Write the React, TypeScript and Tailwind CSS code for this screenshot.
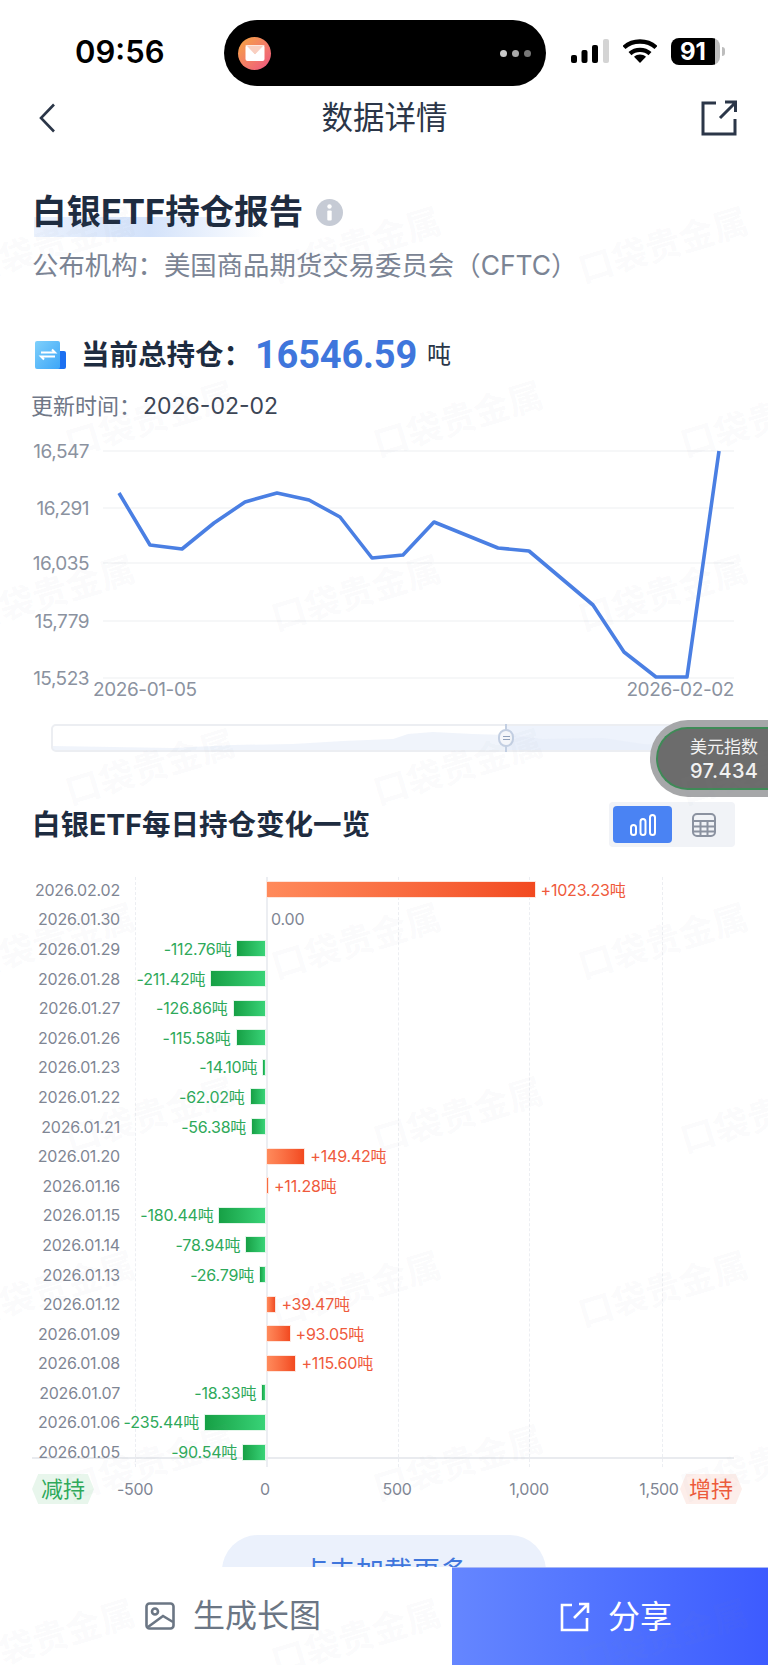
import React from 'react';

interface DayChange {
    date: string;
    value: number;
    label: string;
}

const DAILY_CHANGES: DayChange[] = [
    { date: '2026.02.02', value: 1023.23, label: '+1023.23吨' },
    { date: '2026.01.30', value: 0, label: '0.00' },
    { date: '2026.01.29', value: -112.76, label: '-112.76吨' },
    { date: '2026.01.28', value: -211.42, label: '-211.42吨' },
    { date: '2026.01.27', value: -126.86, label: '-126.86吨' },
    { date: '2026.01.26', value: -115.58, label: '-115.58吨' },
    { date: '2026.01.23', value: -14.1, label: '-14.10吨' },
    { date: '2026.01.22', value: -62.02, label: '-62.02吨' },
    { date: '2026.01.21', value: -56.38, label: '-56.38吨' },
    { date: '2026.01.20', value: 149.42, label: '+149.42吨' },
    { date: '2026.01.16', value: 11.28, label: '+11.28吨' },
    { date: '2026.01.15', value: -180.44, label: '-180.44吨' },
    { date: '2026.01.14', value: -78.94, label: '-78.94吨' },
    { date: '2026.01.13', value: -26.79, label: '-26.79吨' },
    { date: '2026.01.12', value: 39.47, label: '+39.47吨' },
    { date: '2026.01.09', value: 93.05, label: '+93.05吨' },
    { date: '2026.01.08', value: 115.6, label: '+115.60吨' },
    { date: '2026.01.07', value: -18.33, label: '-18.33吨' },
    { date: '2026.01.06', value: -235.44, label: '-235.44吨' },
    { date: '2026.01.05', value: -90.54, label: '-90.54吨' },
];

const PX_PER_TON = 0.2634;

const LINE_POINTS = '119,63 150,115 182,119 214,93 245,72 277,63 309,70 340,87 372,128 403,125 434,92 466,105 498,118 529,121 561,148 593,175 624,222 656,247 687,247 719,21';

const Y_TICKS = [
    { label: '16,547', y: 21 },
    { label: '16,291', y: 78 },
    { label: '16,035', y: 133 },
    { label: '15,779', y: 191 },
    { label: '15,523', y: 248 },
];

const X_TICKS = [
    { label: '-500', x: 135 },
    { label: '0', x: 265 },
    { label: '500', x: 397 },
    { label: '1,000', x: 529 },
    { label: '1,500', x: 659 },
];

const WATERMARKS = [245, 419, 593, 767, 941, 1115, 1289, 1463, 1637].flatMap((y, row) =>
    (row % 2 === 0 ? [50, 356, 663] : [150, 458, 765]).map(x => ({ x, y }))
);

const StatusBar = () => (
    <div className="relative h-[90px] shrink-0 flex items-start">
        <span className="ml-[75px] mt-[33px] w-[92px] text-[31px] leading-[38px] font-semibold text-black">09:56</span>
        <div className="ml-[57px] mt-[20px] w-[322px] h-[66px] rounded-[33px] bg-black flex items-center justify-between pl-[14px] pr-[15px]">
            <div className="w-[33px] h-[33px] rounded-full bg-linear-to-br from-[#f5a637] to-[#ee4f7e] flex items-center justify-center">
                <svg width="20" height="18" viewBox="0 0 20 18">
                    <rect x="0.5" y="1" width="19" height="16" rx="2" fill="#fff" />
                    <path d="M1 1.5h18L10 11z" fill="#f9cfc0" />
                    <path d="M1 1.5L10 11l9-9.5" fill="none" stroke="#fff" strokeWidth="1" />
                </svg>
            </div>
            <div className="flex items-center gap-[5px]">
                <span className="w-[7px] h-[7px] rounded-full bg-[#c9c9c9]" />
                <span className="w-[7px] h-[7px] rounded-full bg-[#a8a8a8]" />
                <span className="w-[7px] h-[7px] rounded-full bg-[#777]" />
            </div>
        </div>
        <svg className="ml-[25px] mt-[39px]" width="38" height="24" viewBox="0 0 38 24">
            <rect x="0" y="16" width="6" height="8" rx="2" fill="#000" />
            <rect x="10.5" y="11" width="6" height="13" rx="2" fill="#000" />
            <rect x="21" y="6" width="6" height="18" rx="2" fill="#000" />
            <rect x="32" y="0" width="6" height="24" rx="2" fill="#d4d4d4" />
        </svg>
        <svg className="ml-[14px] mt-[39px]" width="34" height="24" viewBox="0 0 34 24">
            <path d="M1 8.5C9.5 0.5 24.5 0.5 33 8.5" fill="none" stroke="#000" strokeWidth="4.4" />
            <path d="M7 14.6C12.5 9.6 21.5 9.6 27 14.6" fill="none" stroke="#000" strokeWidth="4.4" />
            <path d="M17 24l-6-6.2c3.4-3 8.6-3 12 0z" fill="#000" />
        </svg>
        <div className="ml-[14px] mt-[38px] flex items-center">
            <div className="w-[49px] h-[27px] rounded-[8px] bg-linear-to-r from-black from-[90%] to-[#bdbdbd] to-[90%] flex items-center justify-start pl-[9px]">
                <span className="text-[24px] leading-[27px] font-bold text-white">91</span>
            </div>
            <span className="ml-[2px] w-[3px] h-[9px] rounded-r-full bg-[#bdbdbd]" />
        </div>
    </div>
);

const NavBar = () => (
    <div className="h-[56px] shrink-0 flex items-center justify-between pl-[38px] pr-[31px]">
        <div className="w-[30px]">
            <svg width="18" height="30" viewBox="0 0 18 30">
                <path d="M16 1.5L3 15l13 13.5" fill="none" stroke="#2b3648" strokeWidth="2.6" />
            </svg>
        </div>
        <h1 className="text-[31.500px] leading-[40px] font-normal text-[#2b3648]">数据详情</h1>
        <svg width="36" height="36" viewBox="0 0 36 36" fill="none" stroke="#2b3648" strokeWidth="3">
            <path d="M15 3H2v31h32V19" />
            <path d="M19 18L34 3M24 2h10.5v10" />
        </svg>
    </div>
);

const SliderBar = () => (
    <div className="relative h-[28px] ml-[51px] w-[667px] rounded-[5px] border-2 border-[#eceef2] bg-white">
        <div className="absolute top-0 bottom-0 left-[454px] right-0 bg-[#eef3fc]" />
        <svg className="absolute inset-0" width="663" height="24" viewBox="0 0 663 24" preserveAspectRatio="none">
            <path d="M0 20L120 22 180 19 240 18 290 15 340 13 355 8 380 6 420 8 455 9 490 13 550 12 590 18 630 20 663 4V24H0z" fill="#e6edf8" fillOpacity="0.6" />
        </svg>
        <div className="absolute left-[452px] top-[-2px] bottom-[-2px] w-[2px] bg-[#c3cfe2]" />
        <div className="absolute left-[445px] top-[3px] w-[16px] h-[18px] rounded-full bg-[#f4f6fa] border-2 border-[#c3cfe2] flex flex-col items-center justify-center gap-[2px]">
            <span className="w-[7px] h-px bg-[#8fa0bb]" />
            <span className="w-[7px] h-px bg-[#8fa0bb]" />
        </div>
    </div>
);

const DailyChart = () => (
    <div className="relative h-[599px] mt-[28px] ml-[32px] w-[702px]">
        <div className="absolute top-[2px] h-[590px] left-[103px] border-l border-dashed border-[#eceef2]" />
        <div className="absolute top-[2px] h-[590px] left-[366px] border-l border-dashed border-[#eceef2]" />
        <div className="absolute top-[2px] h-[590px] left-[497px] border-l border-dashed border-[#eceef2]" />
        <div className="absolute top-[2px] h-[590px] left-[630px] border-l border-dashed border-[#eceef2]" />
        <div className="absolute top-[2px] h-[590px] left-[234px] w-[2px] bg-[#eceef2]" />
        <div className="absolute top-[582px] left-0 right-0 h-[2px] bg-[#e9ebef]" />
        {DAILY_CHANGES.map(item => (
            <div key={item.date} className="relative h-[29.6px] grid grid-cols-[88px_146px_1fr] items-center">
                <span className="text-[16px] leading-[24px] text-right text-[#7f8694] tracking-[-0.2px]">{item.date}</span>
                <div className="flex items-center justify-end gap-[5px]">
                    {item.value < 0 && (
                        <>
                            <span className="whitespace-nowrap text-[16px] leading-[24px] text-[#2ea95a] tracking-[-0.2px]">{item.label}</span>
                            <div
                                className="h-[17px] bg-linear-to-r from-[#16a045] to-[#38d377] border border-[#e2f6e9]"
                                style={{ width: -item.value * PX_PER_TON }}
                            />
                        </>
                    )}
                </div>
                <div className="flex items-center gap-[5px]">
                    {item.value > 0 && (
                        <>
                            <div
                                className="h-[17px] bg-linear-to-r from-[#ff8a5b] to-[#f2491f] border border-[#fde6de]"
                                style={{ width: item.value * PX_PER_TON }}
                            />
                            <span className="whitespace-nowrap text-[16px] leading-[24px] text-[#ef5a3c] tracking-[-0.2px]">{item.label}</span>
                        </>
                    )}
                    {item.value === 0 && (
                        <span className="ml-[5px] text-[16px] leading-[24px] text-[#7f8694] tracking-[-0.2px]">{item.label}</span>
                    )}
                </div>
            </div>
        ))}
    </div>
);

const AxisRow = () => (
    <div className="relative h-[30px] flex items-center justify-between ml-[32px] w-[710px]">
        <span className="w-[62px] h-[30px] bg-[#e8f6ec] text-[#2ea95a] text-[22px] leading-[30px] text-center [clip-path:polygon(10%_0,90%_0,100%_50%,90%_100%,10%_100%,0_50%)]">减持</span>
        {X_TICKS.map(tick => (
            <span
                key={tick.label}
                className="absolute top-0 -translate-x-1/2 text-[16px] leading-[30px] text-[#7f8694] tracking-[-0.3px]"
                style={{ left: tick.x - 32 }}
            >
                {tick.label}
            </span>
        ))}
        <span className="w-[62px] h-[30px] bg-[#fdeeea] text-[#ee5a3a] text-[22px] leading-[30px] text-center [clip-path:polygon(10%_0,90%_0,100%_50%,90%_100%,10%_100%,0_50%)]">增持</span>
    </div>
);

const App: React.FC = () => {
    return (
        <div className="relative w-[768px] h-[1665px] overflow-hidden bg-white flex flex-col font-['Inter','Noto_Sans_CJK_SC',sans-serif]">
            <main className="relative flex-1 min-h-0 overflow-hidden">
                <StatusBar />
                <NavBar />

                <div className="relative mt-[44px] ml-[32px] h-[44px] flex items-center gap-[13px]">
                    <div className="absolute left-[2px] top-[27px] w-[230px] h-[20px] bg-linear-to-r from-[#eaf1fd] via-[#d3e2fa] to-transparent" />
                    <h2 className="relative text-[34.500px] leading-[44px] font-bold text-[#1e2c40]">白银ETF持仓报告</h2>
                    <svg className="relative" width="27" height="27" viewBox="0 0 27 27">
                        <circle cx="13.5" cy="13.5" r="13.5" fill="#c6cbd5" />
                        <circle cx="13.5" cy="7.5" r="2.2" fill="#fff" />
                        <rect x="11.3" y="11.5" width="4.4" height="10" rx="1" fill="#fff" />
                    </svg>
                </div>
                <p className="relative mt-[13px] ml-[32px] text-[26.400px] leading-[36px] text-[#7b8494] whitespace-nowrap">公布机构：美国商品期货交易委员会（CFTC）</p>

                <div className="mt-[50px] ml-[35px] h-[44px] flex items-center">
                    <svg width="31" height="28" viewBox="0 0 31 28">
                        <defs>
                            <linearGradient id="docFill" x1="0" y1="0" x2="1" y2="1">
                                <stop offset="0" stopColor="#7fd0fb" />
                                <stop offset="1" stopColor="#3da6f8" />
                            </linearGradient>
                        </defs>
                        <rect x="20" y="10" width="11" height="18" rx="2" fill="#1c6ff0" />
                        <path d="M2 0h21a2 2 0 0 1 2 2v24a2 2 0 0 1-2 2H2a2 2 0 0 1-2-2V2a2 2 0 0 1 2-2z" fill="url(#docFill)" />
                        <path d="M6 11.500h14l-3-3M20 15.500H6l3 3" fill="none" stroke="#fff" strokeWidth="2" />
                    </svg>
                    <span className="ml-[15px] w-[174px] text-[28.500px] leading-[44px] font-bold text-[#1e2c40] whitespace-nowrap">当前总持仓：</span>
                    <span className="font-['Roboto',sans-serif] text-[38px] leading-[44px] font-bold text-[#3f76dc] tracking-[-0.2px]">16546.59</span>
                    <span className="ml-[10px] text-[24px] leading-[44px] text-[#2b3648]">吨</span>
                </div>
                <div className="mt-[13px] ml-[31px] h-[32px] flex items-center gap-[3px]">
                    <span className="w-[109px] text-[22px] leading-[32px] text-[#6f7787] whitespace-nowrap">更新时间：</span>
                    <span className="text-[23px] leading-[32px] text-[#3b4555]">2026-02-02</span>
                </div>

                <svg className="block mt-[8px]" width="768" height="272" viewBox="0 0 768 272">
                    {Y_TICKS.map(tick => (
                        <g key={tick.label}>
                            <line x1="103" x2="734" y1={tick.y} y2={tick.y} stroke="#f3f4f6" strokeWidth="1.500" />
                            <text x="89" y={tick.y + 7} textAnchor="end" fontSize="19" letterSpacing="-0.5" fill="#8b92a0">{tick.label}</text>
                        </g>
                    ))}
                    <polyline points={LINE_POINTS} fill="none" stroke="#4a7fe3" strokeWidth="3.600" strokeLinejoin="round" />
                    <text x="93" y="266" fontSize="19" letterSpacing="-0.4" fill="#8b92a0">2026-01-05</text>
                    <text x="734" y="266" textAnchor="end" fontSize="19" letterSpacing="-0.4" fill="#8b92a0">2026-02-02</text>
                </svg>

                <div className="mt-[22px]">
                    <SliderBar />
                </div>

                <div className="mt-[50px] pl-[32px] pr-[33px] h-[45px] flex items-center justify-between">
                    <h3 className="text-[28.500px] leading-[40px] font-bold text-[#1e2c40]">白银ETF每日持仓变化一览</h3>
                    <div className="w-[126px] h-[45px] rounded-[4px] bg-[#f1f3f7] flex items-center pl-[4px]">
                        <div className="w-[59px] h-[37px] rounded-[4px] bg-[#4a83f3] flex items-center justify-center">
                            <svg width="26" height="22" viewBox="0 0 26 22" fill="none" stroke="#fff" strokeWidth="2">
                                <rect x="1" y="11" width="5" height="10" rx="2.500" />
                                <rect x="10.500" y="5" width="5" height="16" rx="2.500" />
                                <rect x="20" y="1" width="5" height="20" rx="2.500" />
                            </svg>
                        </div>
                        <div className="w-[63px] flex items-center justify-center">
                            <svg width="24" height="24" viewBox="0 0 24 24" fill="none" stroke="#8b92a0" strokeWidth="2">
                                <rect x="1" y="1" width="22" height="22" rx="4" />
                                <path d="M1 8h22M1 13.500h22M1 18.500h22M8.500 8v15M15.500 8v15" />
                            </svg>
                        </div>
                    </div>
                </div>

                <DailyChart />
                <AxisRow />

                <button className="block mt-[31px] ml-[222px] w-[324px] h-[74px] rounded-[36px] bg-[#ebf1fc] text-[28px] leading-[40px] text-[#3f76dc]">点击加载更多</button>

                <div className="absolute right-0 top-[720px] w-[118px] h-[77px] rounded-l-[38px] bg-[#a6a7a9] py-[7px] pl-[6px]">
                    <div className="h-full rounded-l-[32px] border-[2.500px] border-r-0 border-[#3f8a57] bg-[#6c6c6c] flex flex-col items-start justify-center pl-[32px]">
                        <span className="text-[17px] leading-[24px] text-[#f2f2f2] whitespace-nowrap">美元指数</span>
                        <span className="text-[20px] leading-[24px] font-medium tracking-[0.4px] text-[#f2f2f2]">97.434</span>
                    </div>
                </div>
            </main>

            <footer className="h-[98px] shrink-0 flex bg-white">
                <button className="w-[452px] flex items-center justify-center gap-[18px] pl-[14px] text-[#6b7684]">
                    <svg width="30" height="28" viewBox="0 0 30 28" fill="none" stroke="#6b7684" strokeWidth="2.600">
                        <rect x="1.500" y="1.500" width="27" height="25" rx="3" />
                        <circle cx="10" cy="9.500" r="3" />
                        <path d="M3 25l15-11 10 6" />
                    </svg>
                    <span className="text-[32px] leading-[40px]">生成长图</span>
                </button>
                <button className="flex-1 flex items-center justify-center gap-[18px] pl-[12px] border-t border-[#a9b8f5] bg-linear-to-r from-[#6586ff] to-[#3d5bff] text-white">
                    <svg width="30" height="30" viewBox="0 0 30 30" fill="none" stroke="#fff" strokeWidth="2.600">
                        <path d="M12 3H2v25h25V16" />
                        <path d="M14 16L27 3M19 2h9v9" />
                    </svg>
                    <span className="text-[32px] leading-[40px]">分享</span>
                </button>
            </footer>

            <div className="absolute inset-0 pointer-events-none overflow-hidden">
                {WATERMARKS.map(mark => (
                    <span
                        key={`${mark.x}-${mark.y}`}
                        className="absolute -translate-x-1/2 -translate-y-1/2 -rotate-[17deg] text-[35px] leading-[44px] font-bold text-[#8c96aa]/[0.05] whitespace-nowrap"
                        style={{ left: mark.x, top: mark.y }}
                    >
                        口袋贵金属
                    </span>
                ))}
            </div>
        </div>
    );
};

export default App;
